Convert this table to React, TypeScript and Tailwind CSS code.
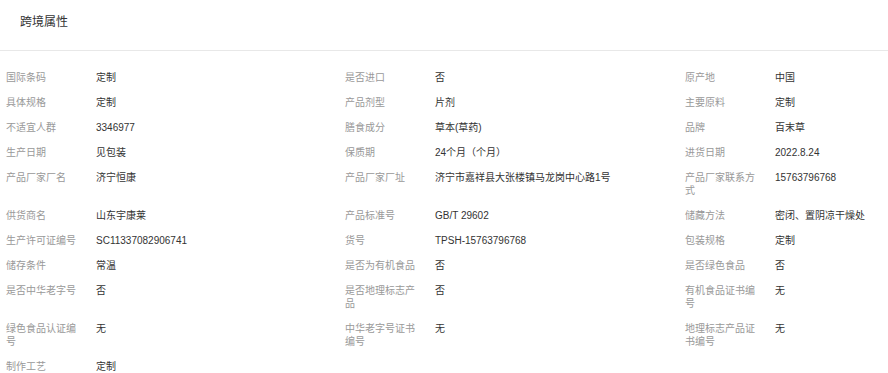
import React from "react";

const rows: [string, string][][] = [
  [["国际条码", "定制"], ["是否进口", "否"], ["原产地", "中国"]],
  [["具体规格", "定制"], ["产品剂型", "片剂"], ["主要原料", "定制"]],
  [["不适宜人群", "3346977"], ["膳食成分", "草本(草药)"], ["品牌", "百末草"]],
  [["生产日期", "见包装"], ["保质期", "24个月（个月）"], ["进货日期", "2022.8.24"]],
  [["产品厂家厂名", "济宁恒康"], ["产品厂家厂址", "济宁市嘉祥县大张楼镇马龙岗中心路1号"], ["产品厂家联系方式", "15763796768"]],
  [["供货商名", "山东宇康莱"], ["产品标准号", "GB/T 29602"], ["储藏方法", "密闭、置阴凉干燥处"]],
  [["生产许可证编号", "SC11337082906741"], ["货号", "TPSH-15763796768"], ["包装规格", "定制"]],
  [["储存条件", "常温"], ["是否为有机食品", "否"], ["是否绿色食品", "否"]],
  [["是否中华老字号", "否"], ["是否地理标志产品", "否"], ["有机食品证书编号", "无"]],
  [["绿色食品认证编号", "无"], ["中华老字号证书编号", "无"], ["地理标志产品证书编号", "无"]],
  [["制作工艺", "定制"]],
];

export default function App() {
  return (
    <div
      className="w-[888px] h-[373px] overflow-hidden bg-white"
      style={{ fontFamily: '"Liberation Sans", "Noto Sans CJK SC", sans-serif' }}
    >
      <div className="h-[51px] border-b border-[#e8e8e8] pl-[20px] flex items-center text-[12px] text-[#333] leading-[14px] pb-[7px]">
        跨境属性
      </div>
      <div className="pt-[14px] pl-[6px]">
        {rows.map((r, i) => (
          <div key={i} className="grid grid-cols-[339px_340px_340px]">
            {r.map(([k, v], j) => (
              <div key={j} className="flex text-[10px] leading-[13px] py-[6px]">
                <div className="w-[90px] shrink-0 pr-[14px] text-[#999]">{k}</div>
                <div className="text-[#333] whitespace-nowrap">{v}</div>
              </div>
            ))}
          </div>
        ))}
      </div>
    </div>
  );
}
